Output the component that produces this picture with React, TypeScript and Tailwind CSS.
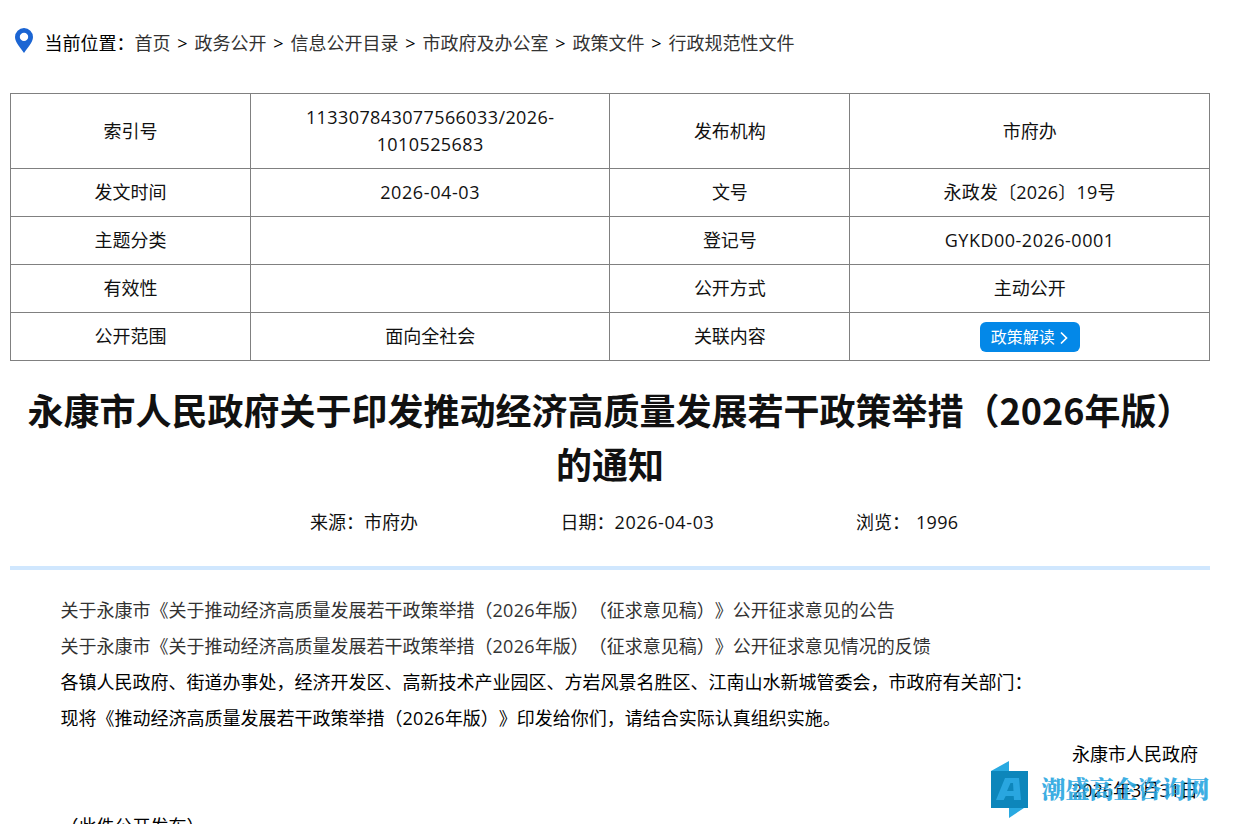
const crumbs = ["首页", "政务公开", "信息公开目录", "市政府及办公室", "政策文件", "行政规范性文件"];

const rows = [
    ["索引号", "113307843077566033/2026-1010525683", "发布机构", "市府办"],
    ["发文时间", "2026-04-03", "文号", "永政发〔2026〕19号"],
    ["主题分类", "", "登记号", "GYKD00-2026-0001"],
    ["有效性", "", "公开方式", "主动公开"],
    ["公开范围", "面向全社会", "关联内容", "政策解读"],
];

const cellStyles: Record<string, string> = {
    "113307843077566033/2026-1010525683": "py-[10px] tracking-[0.4px]",
    索引号: "py-[10px]",
    "2026-04-03": "tracking-[0.6px]",
    "永政发〔2026〕19号": "tracking-[0.2px]",
    "GYKD00-2026-0001": "tracking-[0.5px]",
};

function Breadcrumb() {
    return (
        <nav className="flex items-center h-[27px] mt-[30px] mb-9 pl-[4.5px] text-black whitespace-pre">
            <svg viewBox="0 0 18 25" className="w-[18px] h-[25px] mr-3 -mt-[7px]">
                <path fill="#1b65d3" fillRule="evenodd" d="M9 0a9 9 0 0 0-9 9c0 5.5 5.5 10.500 9 16 3.500-5.500 9-10.500 9-16a9 9 0 0 0-9-9Zm0 4.700a4.200 4.200 0 1 1 0 8.400 4.200 4.200 0 0 1 0-8.400Z" />
            </svg>
            <span className="w-[90px] leading-[27px]">当前位置：</span>
            {crumbs.map((item, index) => (
                <span key={item} className="flex leading-[27px]">
                    {index > 0 && <span className="w-6 text-center">&gt;</span>}
                    <a className="text-[#333]">{item}</a>
                </span>
            ))}
        </nav>
    );
}

function InfoTable() {
    return (
        <table className="w-[1200px] table-fixed border-collapse text-center leading-[27px]">
            <colgroup>
                <col className="w-[20%]" />
                <col className="w-[30%]" />
                <col className="w-[20%]" />
                <col className="w-[30%]" />
            </colgroup>
            <tbody>
                {rows.map((row) => (
                    <tr key={row[0]}>
                        {row.map((cell, index) => (
                            <td key={index} className="h-12 px-[50px] py-0 border border-[#808080]">
                                {cell === "政策解读" ? (
                                    <a className="inline-flex items-center w-[100px] h-[30px] pl-[11px] rounded-md bg-[#0388e8] text-white text-base align-middle">
                                        {cell}
                                        <svg viewBox="0 0 8 14" className="w-2 h-3.5 ml-[5px] mt-0.5" fill="none" stroke="white" strokeWidth="1.7">
                                            <path d="M1 1.500 6.500 7 1 12.500" />
                                        </svg>
                                    </a>
                                ) : (
                                    <div className={cellStyles[cell]}>{cell}</div>
                                )}
                            </td>
                        ))}
                    </tr>
                ))}
            </tbody>
        </table>
    );
}

function Watermark() {
    return (
        <div className="absolute left-[989.5px] top-[760px] flex items-center text-[#29a6e0]">
            <svg viewBox="0 0 38 58" className="w-[38px] h-[58px]">
                <path fill="#29a9e1" d="M1 11 19 1v12H1ZM19 46h18L19 58Z" />
                <path fill="#0d86bb" d="M1 11h37v37H1Z" />
                <path fill="#29a6e0" fillRule="evenodd" d="M15 18h14l2 22h-7l-.3-4h-8l-2 4H6Zm5.500 5-3.500 8h6.500l-.5-8Z" />
            </svg>
            <span className="ml-3.5 -mt-0.5 text-2xl leading-none font-black opacity-90 font-['Noto_Serif_CJK_SC','Noto_Sans_CJK_SC',serif]">潮盛高企咨询网</span>
        </div>
    );
}

export default function App() {
    return (
        <div className="relative flow-root w-full h-[824px] pl-[10px] overflow-hidden bg-white text-lg text-[#111] font-['Open_Sans','Noto_Sans_CJK_SC',sans-serif] [text-spacing-trim:space-all]">
            <Breadcrumb />
            <InfoTable />
            <h1 className="w-[1200px] mt-[21px] text-center text-4xl leading-[54px] font-bold font-['Noto_Sans_CJK_SC',sans-serif]">
                永康市人民政府关于印发推动经济高质量发展若干政策举措（2026年版）
                <br />
                的通知
            </h1>
            <div className="flex w-[1200px] h-20 pl-[300px] pt-[19px] leading-[27px] border-b-4 border-[#d0e7fe] whitespace-pre">
                <span className="w-[250.5px]">来源：市府办</span>
                <span className="w-[295.5px]">
                    日期：<span className="tracking-[0.6px]">2026-04-03</span>
                </span>
                <span>
                    浏览：<span className="ml-1.5 tracking-[0.3px]">1996</span>
                </span>
            </div>
            <article className="w-[1188px] mt-[22px] pl-[50.5px] leading-9 text-black whitespace-nowrap">
                <p className="text-[#333]">
                    关于永康市《关于推动经济高质量发展若干政策举措（<span className="tracking-[0.3px]">2026</span>年版）（征求意见稿）》公开征求意见的公告
                </p>
                <p className="text-[#333]">
                    关于永康市《关于推动经济高质量发展若干政策举措（<span className="tracking-[0.3px]">2026</span>年版）（征求意见稿）》公开征求意见情况的反馈
                </p>
                <p>各镇人民政府、街道办事处，经济开发区、高新技术产业园区、方岩风景名胜区、江南山水新城管委会，市政府有关部门：</p>
                <p>
                    现将《推动经济高质量发展若干政策举措（<span className="tracking-[0.3px]">2026</span>年版）》印发给你们，请结合实际认真组织实施。
                </p>
                <p className="text-right">永康市人民政府</p>
                <p className="text-right">2026年3月31日</p>
                <p>（此件公开发布）</p>
            </article>
            <Watermark />
        </div>
    );
}
